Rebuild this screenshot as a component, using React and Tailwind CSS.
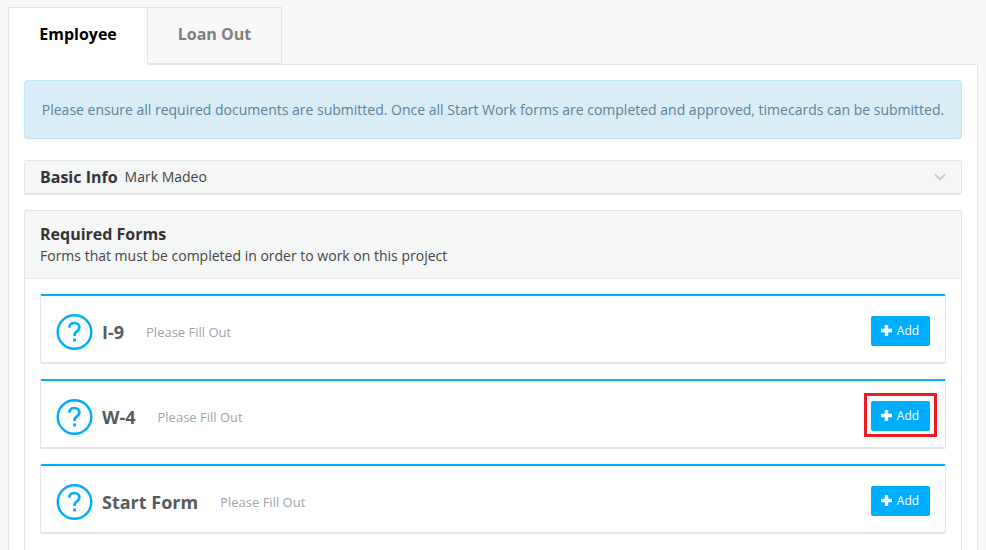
const forms = [
  { name: "I-9" },
  { name: "W-4", marked: true },
  { name: "Start Form" },
];

function QuestionIcon() {
  return (
    <svg className="w-[37px] h-[36px] shrink-0" viewBox="0 0 37 36" fill="none">
      <circle cx="18.5" cy="18" r="16.8" stroke="#00aeff" strokeWidth="2.4" />
      <path d="M13.2 13.600c.4-2.900 2.500-4.600 5.200-4.600 2.900 0 5 1.800 5 4.400 0 2-1.100 3-2.500 4-1.500 1.100-2.300 1.900-2.300 3.700v1" stroke="#00aeff" strokeWidth="2.700" />
      <rect x="17.100" y="24.500" width="3" height="3" fill="#00aeff" />
    </svg>
  );
}

function AddButton({ marked }) {
  return (
    <div className="relative -mt-[2px]">
      <button className="flex items-center justify-center w-[59px] h-[30px] rounded-[2px] bg-[#00aeff] text-white text-[12px] leading-none">
        <svg className="w-[13px] h-[13px] mr-[3px] -ml-[1px] -translate-x-[1px] -translate-y-[1px]" viewBox="0 0 13 13" fill="#fff">
          <path d="M4.800 1h3.400v3.800H12v3.400H8.200V12H4.800V8.200H1V4.800h3.800z" />
        </svg>
        Add
      </button>
      {marked && <div className="absolute -left-[7px] -top-[8px] w-[73px] h-[44px] border-[3px] border-[#ed1c24]" />}
    </div>
  );
}

function FormRow({ name, marked }) {
  return (
    <div className="h-[70px] flex items-center pt-[6px] pl-[15px] pr-[15px] bg-white border border-[#e3e6e6] border-t-2 border-t-[#00aeff] border-b-2 border-b-[#e3e6e6] rounded-[2px]">
      <QuestionIcon />
      <span className="ml-[9px] text-[18px] font-bold text-[#555b5f]">{name}</span>
      <span className="ml-[22px] mt-[2px] text-[13px] text-[#a0a5aa]">Please Fill Out</span>
      <div className="ml-auto">
        <AddButton marked={marked} />
      </div>
    </div>
  );
}

export default function App() {
  return (
    <div className="h-[550px] overflow-hidden bg-[#f8f8f8] pt-[7px] pl-[8px] pr-[8px] font-['Open_Sans',sans-serif] text-[14px]">
      {/* Tabs */}
      <div className="flex h-[58px] relative z-10">
        <div className="w-[140px] h-[58px] pb-[6px] flex items-center justify-center bg-white border border-b-0 border-[#e5e5e5] text-[16px] font-bold text-black">
          Employee
        </div>
        <div className="w-[134px] h-[57px] pb-[4px] flex items-center justify-center bg-[#f8f8f8] border border-l-0 border-[#e5e5e5] text-[16px] font-bold text-[#7f7f7f]">
          Loan Out
        </div>
      </div>

      <div className="-mt-[1px] bg-white border border-[#e5e5e5] px-[15px] pt-[15px] h-[600px]">
        {/* Notice */}
        <div className="h-[59px] flex items-center justify-center rounded-[3px] bg-[#d9edf6] border border-[#bce8f1] text-[#5b8299]">
          Please ensure all required documents are submitted. Once all Start Work forms are completed and approved, timecards can be submitted.
        </div>

        {/* Basic Info */}
        <div className="mt-[21px] h-[35px] flex items-center px-[15px] bg-[#f5f7f7] border border-[#e3e6e6] border-b-2 rounded-[2px]">
          <span className="text-[16px] font-bold text-[#333]">Basic Info</span>
          <span className="ml-[7px] -mt-[2px] text-[#444]">Mark Madeo</span>
          <svg className="ml-auto w-[12px] h-[8px]" viewBox="0 0 12 8" fill="none">
            <path d="M1 1.500l5 5 5-5" stroke="#c8c8c8" strokeWidth="1.800" />
          </svg>
        </div>

        {/* Required Forms */}
        <div className="mt-[15px] h-[500px] border border-[#e3e6e6] rounded-[2px]">
          <div className="h-[68px] px-[15px] pt-[13px] bg-[#f5f7f7] border-b border-[#e9ebeb]">
            <div className="text-[16px] leading-[20px] font-bold text-[#333]">Required Forms</div>
            <div className="mt-[1px] leading-[22px] text-[#444]">Forms that must be completed in order to work on this project</div>
          </div>
          <div className="px-[15px] pt-[15px] flex flex-col gap-[15px]">
            {forms.map((f) => (
              <FormRow key={f.name} {...f} />
            ))}
          </div>
        </div>
      </div>
    </div>
  );
}
